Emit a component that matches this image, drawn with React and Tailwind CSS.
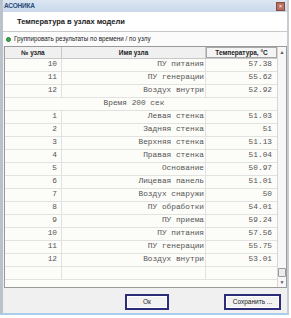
import React from "react";

const rows = [
  ["10", "ПУ питания", "57.38"],
  ["11", "ПУ генерации", "55.62"],
  ["12", "Воздух внутри", "52.92"],
  ["sep", "Время 200 сек", ""],
  ["1", "Левая стенка", "51.03"],
  ["2", "Задняя стенка", "51"],
  ["3", "Верхняя стенка", "51.13"],
  ["4", "Правая стенка", "51.04"],
  ["5", "Основание", "50.97"],
  ["6", "Лицевая панель", "51.01"],
  ["7", "Воздух снаружи", "50"],
  ["8", "ПУ обработки", "54.01"],
  ["9", "ПУ приема", "59.24"],
  ["10", "ПУ питания", "57.56"],
  ["11", "ПУ генерации", "55.75"],
  ["12", "Воздух внутри", "53.01"],
  ["", "", ""],
];

const mono = { fontFamily: '"Liberation Mono", "Courier New", monospace' };

export default function App() {
  return (
    <div
      className="w-[291px] h-[318px] bg-white overflow-hidden"
      style={{ fontFamily: '"Liberation Sans", Arial, sans-serif' }}
    >
      <div className="w-[289px] h-[315px] flex flex-col border-l-[3px] border-l-[#b9c3cc] border-r-[2px] border-r-[#c5ccd4] border-b-[2px] border-b-[#a9cdec] bg-[#f0f0f0]">
        {/* title bar */}
        <div className="h-[12px] flex items-center bg-gradient-to-b from-[#dbe6f2] to-[#c9d8ea] pl-[1px] pr-[2px]">
          <span className="text-[6.5px] font-bold text-[#2b4a78] tracking-[-0.2px]">АСОНИКА</span>
          <div className="ml-auto w-[9px] h-[9px] bg-[#b86f5f] border border-[#8c4a3e] flex items-center justify-center text-white text-[6px] leading-none">
            ×
          </div>
        </div>
        {/* header */}
        <div className="h-[20px] bg-white flex items-center pl-[14px] pt-[1px] border-b border-[#c8c8c8]">
          <span className="text-[7.5px] font-bold text-[#1a1a1a]">Температура в узлах модели</span>
        </div>
        {/* radio row */}
        <div className="h-[14px] bg-[#fbfbfb] flex items-center pl-[3px] gap-[3px]">
          <div className="w-[5px] h-[5px] rounded-full bg-[#3aa84a] border border-[#2a7a35]" />
          <span className="text-[6.3px] text-[#222]">Группировать результаты по времени / по узлу</span>
        </div>
        {/* table */}
        <div className="h-[242px] ml-[1px] flex border border-[#9a9a9a] bg-[#fcfcf9]">
          <div className="flex flex-col w-[272px]">
            <div className="h-[12px] flex bg-[#f0f0f0] border-b border-[#c8c8c8] text-[6.5px] font-bold text-[#222]">
              <div className="w-[57px] flex items-center justify-center border-r border-[#c8c8c8]">№ узла</div>
              <div className="w-[144px] flex items-center justify-center border-r border-[#c8c8c8]">Имя узла</div>
              <div className="w-[71px] flex items-center justify-center border border-[#a8a8a8] bg-[#f4f4f4]">Температура, °C</div>
            </div>
            {rows.map((r, i) =>
              r[0] === "sep" ? (
                <div key={i} className="h-[13px] flex border-b border-[#e2e2e2] text-[7.8px] text-[#555]" style={mono}>
                  <div className="w-[57px]" />
                  <div className="w-[144px] flex items-center justify-center">{r[1]}</div>
                  <div className="w-[71px]" />
                </div>
              ) : (
                <div key={i} className="h-[13px] flex border-b border-[#e2e2e2] text-[7.8px] text-[#555]" style={mono}>
                  <div className="w-[57px] flex items-center justify-end pr-[4px] border-r border-[#e2e2e2]">{r[0]}</div>
                  <div className="w-[144px] flex items-center justify-end pr-[1px] border-r border-[#e2e2e2]">{r[1]}</div>
                  <div className="w-[71px] flex items-center justify-end pr-[5px]">{r[2]}</div>
                </div>
              )
            )}
          </div>
          {/* scrollbar */}
          <div className="w-[11px] flex flex-col bg-[#f7f7f7] border-l border-[#d6d6d6]">
            <div className="h-[11px] flex items-center justify-center text-[5px] text-[#555]">▲</div>
            <div className="flex-1 flex flex-col justify-end items-center pb-[1px]">
              <div className="w-[8px] h-[9px] border border-[#9a9a9a] bg-[#ececec] rounded-[1px]" />
            </div>
            <div className="h-[9px] flex items-center justify-center text-[5px] text-[#555]">▼</div>
          </div>
        </div>
        {/* bottom */}
        <div className="flex-1 flex items-center justify-end pr-[6px] gap-[55px] pt-[2px]">
          <div className="w-[44px] h-[16px] border-[2px] border-[#2c2c78] bg-[#f2f2f2] flex items-center justify-center text-[6.5px] text-[#222] shadow-[inset_0_0_0_1px_#ffffff]">
            Ок
          </div>
          <div className="w-[57px] h-[16px] border-[2px] border-[#2c2c78] bg-[#f2f2f2] flex items-center justify-center text-[6.5px] text-[#222] shadow-[inset_0_0_0_1px_#ffffff]">
            Сохранить ...
          </div>
        </div>
      </div>
    </div>
  );
}
